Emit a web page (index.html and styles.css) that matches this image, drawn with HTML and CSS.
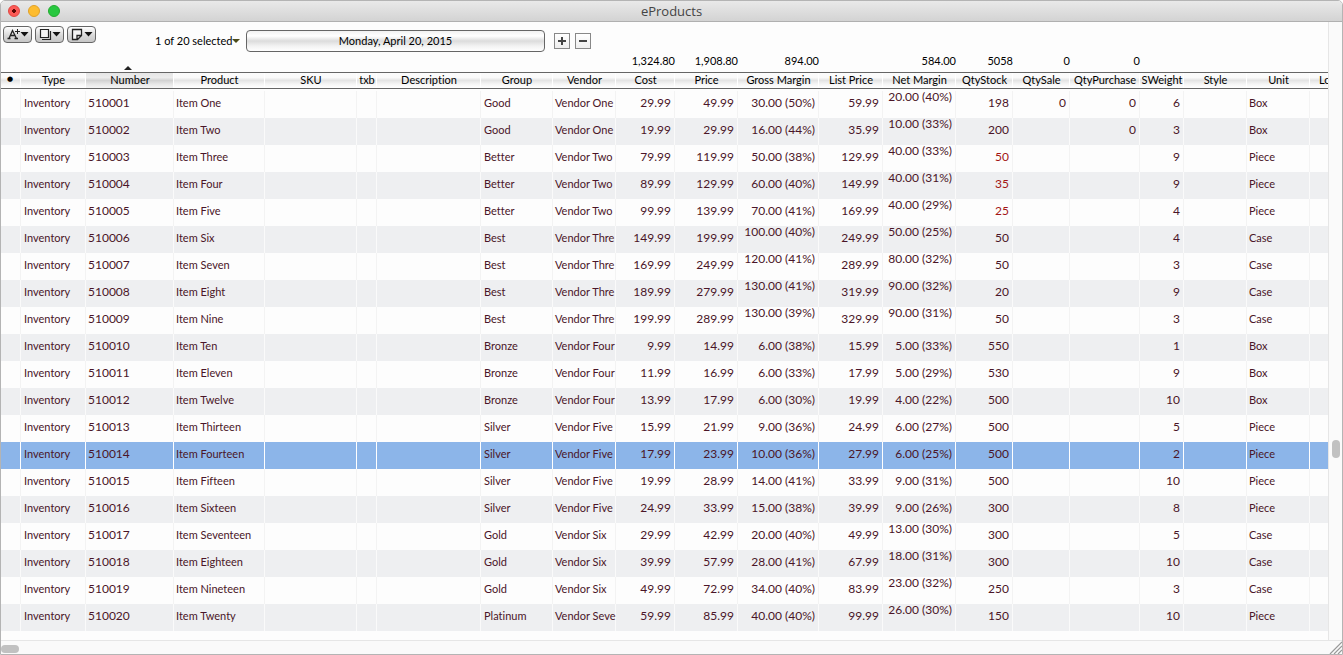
FILE: index.html
```html
<!DOCTYPE html>
<html lang="en">
<head>
<meta charset="utf-8">
<title>eProducts</title>
<link rel="stylesheet" href="styles.css">
</head>
<body>
<div class="window">
  <header class="titlebar">
    <div class="lights">
      <button class="light close" aria-label="Close"></button>
      <button class="light minimize" aria-label="Minimize"></button>
      <button class="light maximize" aria-label="Zoom"></button>
    </div>
    <h1 class="title">eProducts</h1>
  </header>
  <div class="main">
    <div class="content">
      <div class="toolbar">
        <div class="tools">
          <button class="tool" aria-label="Text size">
            <svg width="29" height="17" viewBox="0 0 29 17"><path d="M6 12.500L9.500 4.500L13.500 12.500M7 9.500H12.500M4.500 12.500H7.500M11.500 12.500H15" fill="none" stroke="#222" stroke-width="1.300"/><path d="M14.500 3V8M12 5.500H17" stroke="#222" stroke-width="1"/><path d="M17.500 6H25.500L21.500 10.500Z" fill="#111"/></svg>
          </button>
          <button class="tool" aria-label="Layouts">
            <svg width="29" height="17" viewBox="0 0 29 17"><path d="M5.500 3.500H13.500V11.500H5.500Z" fill="#f4f4f4" stroke="#222" stroke-width="1.200"/><path d="M15.500 5V13.500H7" fill="none" stroke="#222" stroke-width="1.200"/><path d="M17.500 6H25.500L21.500 10.500Z" fill="#111"/></svg>
          </button>
          <button class="tool" aria-label="Notes">
            <svg width="29" height="17" viewBox="0 0 29 17"><path d="M5.500 3.500H14.500V9.500L10.500 13.500H5.500ZM10 13.500V9.500H14.500" fill="#f4f4f4" stroke="#222" stroke-width="1.300"/><path d="M17.500 6H25.500L21.500 10.500Z" fill="#111"/></svg>
          </button>
        </div>
        <button class="selection">1 of 20 selected <span class="arrow"></span></button>
        <button class="date">Monday, April 20, 2015</button>
        <div class="steps">
          <button class="step" aria-label="Add"><svg width="14" height="14" viewBox="0 0 14 14"><path d="M7 3V11M3 7H11" stroke="#444" stroke-width="2"/></svg></button>
          <button class="step" aria-label="Remove"><svg width="14" height="14" viewBox="0 0 14 14"><path d="M3 7H11" stroke="#444" stroke-width="2"/></svg></button>
        </div>
      </div>
      <table class="products">
        <colgroup>
          <col class="w-mark"><col class="w-type"><col class="w-number"><col class="w-product"><col class="w-sku"><col class="w-mark"><col class="w-desc"><col class="w-group"><col class="w-std"><col class="w-cost"><col class="w-std"><col class="w-gross"><col class="w-list"><col class="w-net"><col class="w-qty"><col class="w-qty"><col class="w-purchase"><col class="w-weight"><col class="w-std"><col class="w-std"><col>
        </colgroup>
        <thead>
          <tr class="totals">
            <td></td><td></td><td class="sort"><span class="sort-up"></span></td><td></td><td></td><td></td><td></td><td></td><td></td><td>1,324.80</td><td>1,908.80</td><td>894.00</td><td></td><td>584.00</td><td>5058</td><td>0</td><td>0</td><td></td><td></td><td></td><td></td>
          </tr>
          <tr class="heads">
            <th class="mark">●</th><th>Type</th><th class="sorted">Number</th><th>Product</th><th>SKU</th><th>txb</th><th>Description</th><th>Group</th><th>Vendor</th><th>Cost</th><th>Price</th><th>Gross Margin</th><th>List Price</th><th>Net Margin</th><th>QtyStock</th><th>QtySale</th><th>QtyPurchase</th><th>SWeight</th><th>Style</th><th>Unit</th><th class="cut">Lo</th>
          </tr>
        </thead>
        <tbody id="rows"></tbody>
      </table>
    </div>
    <div class="vbar"><span class="vthumb"></span></div>
  </div>
  <footer class="hbar">
    <span class="hthumb"></span>
    <svg class="grip" width="14" height="14" viewBox="0 0 14 14"><path d="M2 14L14 2M6 14L14 6M10 14L14 10" stroke="#999" stroke-width="1.200"/></svg>
  </footer>
</div>
<script src="app.js"></script>
</body>
</html>
```
FILE: styles.css
```css
* { box-sizing: border-box; }
body {
  margin: 0;
  font: 11px/16px Lato, "Open Sans", sans-serif;
  font-variant-ligatures: none;
  color: #000;
}
button { font: inherit; color: inherit; padding: 0; margin: 0; border: 0; background: none; }
.window {
  display: flex;
  flex-direction: column;
  height: 100vh;
  border: 1px solid #b4b4b4;
  border-radius: 5px 5px 0 0;
  background: #fdfdfd;
  overflow: hidden;
}
.titlebar {
  display: grid;
  grid-template-columns: 1fr auto 1fr;
  align-items: center;
  flex: none;
  height: 21px;
  border-bottom: 1px solid #b0b0b0;
  background: linear-gradient(#e9e9e9, #d3d3d3);
}
.lights { display: flex; gap: 8px; padding-left: 7px; }
.light { width: 12px; height: 12px; border-radius: 50%; border: 1px solid; }
.close { border-color: #e0443e; background: radial-gradient(circle, #5a0804 0 2px, #fc5b57 2px); }
.minimize { border-color: #e0a028; background: #fdbc2f; }
.maximize { border-color: #24ab30; background: #28c840; }
.title { margin: 0; font-family: "Open Sans", sans-serif; font-size: 13px; font-weight: 400; color: #444; }
.main { display: flex; flex: 1; min-height: 0; }
.content { flex: 1; min-width: 0; overflow: hidden; }
.toolbar { display: flex; height: 30px; padding: 4px 2px 0; }
.tools { display: flex; gap: 3px; width: 152px; flex: none; }
.tool {
  display: flex;
  width: 29px;
  height: 17px;
  border: 1px solid #666;
  border-radius: 4px;
  background: linear-gradient(#fff, #d6d6d6 60%, #c6c6c6);
}
.tool svg { flex: none; margin: -1px; }
.selection { display: flex; align-items: center; gap: 0; width: 91px; height: 24px; margin-top: 3px; white-space: nowrap; }
.arrow { border: 4px solid transparent; border-top-color: #4b4b18; border-bottom: 0; }
.date {
  width: 299px;
  height: 22px;
  margin-top: 4px;
  border: 1px solid #666;
  border-radius: 4px;
  background: linear-gradient(#f2f2f2, #fff 25%, #dcdcdc 50%, #f2f2f2 75%, #fff);
}
.steps { display: flex; gap: 5px; padding: 7px 0 0 9px; }
.step { display: grid; place-items: center; width: 16px; height: 16px; border: 1px solid #888; background: linear-gradient(#fff, #eee); }

.products { width: 100%; min-width: 1327px; table-layout: fixed; border-collapse: separate; border-spacing: 0; }
.w-mark { width: 20px; }
.w-type { width: 65px; }
.w-number { width: 88px; }
.w-product { width: 91px; }
.w-sku { width: 92px; }
.w-desc { width: 104px; }
.w-group { width: 72px; }
.w-std { width: 63px; }
.w-cost { width: 59px; }
.w-gross { width: 81px; }
.w-list { width: 64px; }
.w-net { width: 73px; }
.w-qty { width: 57px; }
.w-purchase { width: 70px; }
.w-weight { width: 44px; }
.products th, .products td { white-space: nowrap; }
.products .totals td { height: 20px; padding: 0 0 2px; text-align: right; }
.products .totals .sort { text-align: center; vertical-align: bottom; line-height: 0; }
.sort-up { display: inline-block; margin-right: 4px; border: 4px solid transparent; border-top: 0; border-bottom-color: #222; }
.products th {
  height: 17px;
  padding: 0 0 2px;
  border: solid #666;
  border-width: 1px 0;
  font-weight: 400;
  line-height: 13px;
  background:
    linear-gradient(#fff, #fff) right / 1px 100% no-repeat,
    linear-gradient(#fcfcfc, #fafafa 30%, #e4e4e4 50%, #f6f6f6 75%, #fff);
}
.products .sorted {
  background:
    linear-gradient(#fff, #fff) right / 1px 100% no-repeat,
    linear-gradient(#e6e6e6, #ececec 30%, #d2d2d2 50%, #e8e8e8 75%, #f4f4f4);
}
.products .mark { padding-right: 2px; font-family: "DejaVu Sans", sans-serif; font-size: 7px; }
.products .cut { padding-left: 9px; text-align: left; overflow: hidden; }
.products tbody::before { content: ""; display: table-row; height: 2px; }
.products tbody td { height: 27px; padding: 0 3px 4px; border-right: 1px solid #f3f3f3; color: #4a1528; line-height: 14px; }
.products tbody tr:nth-child(even) td { background: #eeeff1; border-right-color: #fafafa; }
.products tbody tr.selected td { background: #8cb5e9; border-right-color: #fff; }
.products tbody td:last-child { border-right: 0; }
.products .num { text-align: right; font-size: 12px; }
.products .code { font-size: 12px; }
.products tbody .code, .products tbody .name { padding-left: 2px; }
.products tbody .name { padding-right: 0; }
.products tbody .raised { vertical-align: top; line-height: 12px; }
.products tbody .low { color: #a31515; }
.vbar { flex: none; width: 14px; border-left: 1px solid #e6e6e6; background: #fafafa; display: flex; justify-content: center; }
.vthumb { width: 8px; height: 18px; margin-top: 418px; border-radius: 4px; background: #c1c1c1; }
.hbar { display: flex; align-items: flex-end; justify-content: space-between; flex: none; height: 14px; border-top: 1px solid #e6e6e6; background: #fafafa; }
.hthumb { width: 18px; height: 8px; margin-bottom: 1px; border-radius: 4px; background: #c1c1c1; }
```
FILE: app.js
```js
// number, product, group, vendor, cost, price, gross, list, net, stock, sale, purchase, weight, unit
const products = [
  ["510001", "Item One", "Good", "Vendor One", "29.99", "49.99", "30.00 (50%)", "59.99", "20.00 (40%)", "198", "0", "0", "6", "Box"],
  ["510002", "Item Two", "Good", "Vendor One", "19.99", "29.99", "16.00 (44%)", "35.99", "10.00 (33%)", "200", "", "0", "3", "Box"],
  ["510003", "Item Three", "Better", "Vendor Two", "79.99", "119.99", "50.00 (38%)", "129.99", "40.00 (33%)", "50", "", "", "9", "Piece"],
  ["510004", "Item Four", "Better", "Vendor Two", "89.99", "129.99", "60.00 (40%)", "149.99", "40.00 (31%)", "35", "", "", "9", "Piece"],
  ["510005", "Item Five", "Better", "Vendor Two", "99.99", "139.99", "70.00 (41%)", "169.99", "40.00 (29%)", "25", "", "", "4", "Piece"],
  ["510006", "Item Six", "Best", "Vendor Thre", "149.99", "199.99", "100.00 (40%)", "249.99", "50.00 (25%)", "50", "", "", "4", "Case"],
  ["510007", "Item Seven", "Best", "Vendor Thre", "169.99", "249.99", "120.00 (41%)", "289.99", "80.00 (32%)", "50", "", "", "3", "Case"],
  ["510008", "Item Eight", "Best", "Vendor Thre", "189.99", "279.99", "130.00 (41%)", "319.99", "90.00 (32%)", "20", "", "", "9", "Case"],
  ["510009", "Item Nine", "Best", "Vendor Thre", "199.99", "289.99", "130.00 (39%)", "329.99", "90.00 (31%)", "50", "", "", "3", "Case"],
  ["510010", "Item Ten", "Bronze", "Vendor Four", "9.99", "14.99", "6.00 (38%)", "15.99", "5.00 (33%)", "550", "", "", "1", "Box"],
  ["510011", "Item Eleven", "Bronze", "Vendor Four", "11.99", "16.99", "6.00 (33%)", "17.99", "5.00 (29%)", "530", "", "", "9", "Box"],
  ["510012", "Item Twelve", "Bronze", "Vendor Four", "13.99", "17.99", "6.00 (30%)", "19.99", "4.00 (22%)", "500", "", "", "10", "Box"],
  ["510013", "Item Thirteen", "Silver", "Vendor Five", "15.99", "21.99", "9.00 (36%)", "24.99", "6.00 (27%)", "500", "", "", "5", "Piece"],
  ["510014", "Item Fourteen", "Silver", "Vendor Five", "17.99", "23.99", "10.00 (36%)", "27.99", "6.00 (25%)", "500", "", "", "2", "Piece"],
  ["510015", "Item Fifteen", "Silver", "Vendor Five", "19.99", "28.99", "14.00 (41%)", "33.99", "9.00 (31%)", "500", "", "", "10", "Piece"],
  ["510016", "Item Sixteen", "Silver", "Vendor Five", "24.99", "33.99", "15.00 (38%)", "39.99", "9.00 (26%)", "300", "", "", "8", "Piece"],
  ["510017", "Item Seventeen", "Gold", "Vendor Six", "29.99", "42.99", "20.00 (40%)", "49.99", "13.00 (30%)", "300", "", "", "5", "Case"],
  ["510018", "Item Eighteen", "Gold", "Vendor Six", "39.99", "57.99", "28.00 (41%)", "67.99", "18.00 (31%)", "300", "", "", "10", "Case"],
  ["510019", "Item Nineteen", "Gold", "Vendor Six", "49.99", "72.99", "34.00 (40%)", "83.99", "23.00 (32%)", "250", "", "", "3", "Case"],
  ["510020", "Item Twenty", "Platinum", "Vendor Seve", "59.99", "85.99", "40.00 (40%)", "99.99", "26.00 (30%)", "150", "", "", "10", "Piece"]
];
const lowStock = ["510003", "510004", "510005"];
const selected = "510014";
const body = document.getElementById("rows");

function cell(row, text, className) {
  const td = row.insertCell();
  td.textContent = text;
  if (className) td.className = className;
}

for (const p of products) {
  const row = body.insertRow();
  if (p[0] === selected) row.className = "selected";
  cell(row, "");
  cell(row, "Inventory");
  cell(row, p[0], "code");
  cell(row, p[1], "name");
  cell(row, "");
  cell(row, "");
  cell(row, "");
  cell(row, p[2]);
  cell(row, p[3], "name");
  cell(row, p[4], "num");
  cell(row, p[5], "num");
  cell(row, p[6], p[6].length > 11 ? "num raised" : "num");
  cell(row, p[7], "num");
  cell(row, p[8], p[8].length > 10 ? "num raised" : "num");
  cell(row, p[9], lowStock.includes(p[0]) ? "num low" : "num");
  cell(row, p[10], "num");
  cell(row, p[11], "num");
  cell(row, p[12], "num");
  cell(row, "");
  cell(row, p[13], "name");
  cell(row, "");
}
```
